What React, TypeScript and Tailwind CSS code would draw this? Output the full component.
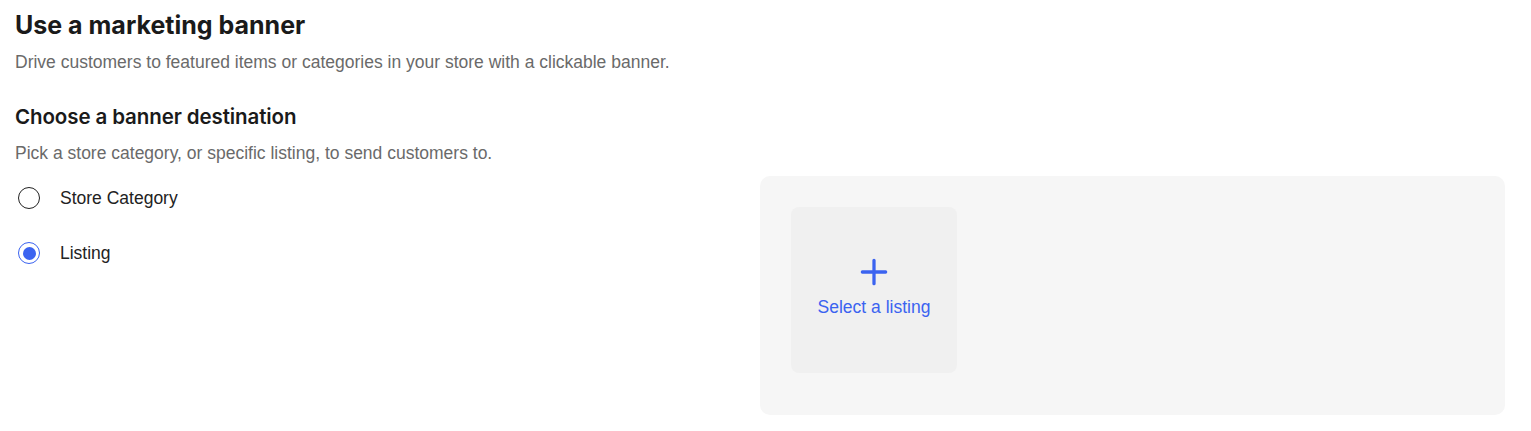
import { useState } from "react";

export default function App() {
  const [dest, setDest] = useState<"category" | "listing">("listing");

  return (
    <div className="min-h-screen bg-white pl-[15px] pr-[26px] pt-[9px] font-['Liberation_Sans',Arial,sans-serif]">
      <h1 className="text-[25px] leading-[32px] font-bold text-[#1a1a1a] font-['Inter',sans-serif]">
        Use a marketing banner
      </h1>
      <p className="mt-[8px] text-[17.5px] leading-[26px] text-[#6a6a6a]">
        Drive customers to featured items or categories in your store with a clickable banner.
      </p>

      <h2 className="mt-[28px] text-[20.5px] leading-[28px] font-semibold text-[#1a1a1a] font-['Inter',sans-serif] tracking-[-0.1px]">
        Choose a banner destination
      </h2>
      <p className="mt-[9px] text-[17.5px] leading-[26px] text-[#6a6a6a]">
        Pick a store category, or specific listing, to send customers to.
      </p>

      <div className="grid grid-cols-2">
        {/* radio options */}
        <div className="flex flex-col gap-[29px] pt-[19px]">
          <label
            className="flex items-center gap-[20px] cursor-pointer"
            onClick={() => setDest("category")}
          >
            <span
              className={
                dest === "category"
                  ? "ml-[3px] flex h-[22px] w-[22px] items-center justify-center rounded-full border-[1.5px] border-[#3b63f0]"
                  : "ml-[3px] flex h-[22px] w-[22px] items-center justify-center rounded-full border-[1.5px] border-[#222]"
              }
            >
              {dest === "category" && <span className="h-[13px] w-[13px] rounded-full bg-[#3b63f0]" />}
            </span>
            <span className="text-[17.5px] leading-[26px] text-[#222]">Store Category</span>
          </label>
          <label
            className="flex items-center gap-[20px] cursor-pointer"
            onClick={() => setDest("listing")}
          >
            <span
              className={
                dest === "listing"
                  ? "ml-[3px] flex h-[22px] w-[22px] items-center justify-center rounded-full border-[1.5px] border-[#3b63f0]"
                  : "ml-[3px] flex h-[22px] w-[22px] items-center justify-center rounded-full border-[1.5px] border-[#222]"
              }
            >
              {dest === "listing" && <span className="h-[13px] w-[13px] rounded-full bg-[#3b63f0]" />}
            </span>
            <span className="text-[17.5px] leading-[26px] text-[#222]">Listing</span>
          </label>
        </div>

        {/* listing picker */}
        <div className="mt-[10px] h-[239px] rounded-[10px] bg-[#f6f6f6] p-[31px]">
          <button className="flex h-[166px] w-[166px] flex-col items-center justify-center rounded-[8px] bg-[#f0f0f0] pb-[3px]">
            <svg width="28" height="28" viewBox="0 0 24 24" fill="none" stroke="#3b63f0" strokeWidth="2.8" strokeLinecap="round">
              <path d="M12 2v20M2 12h20" />
            </svg>
            <span className="mt-[9px] text-[17.5px] leading-[24px] text-[#3b63f0]">Select a listing</span>
          </button>
        </div>
      </div>
    </div>
  );
}
